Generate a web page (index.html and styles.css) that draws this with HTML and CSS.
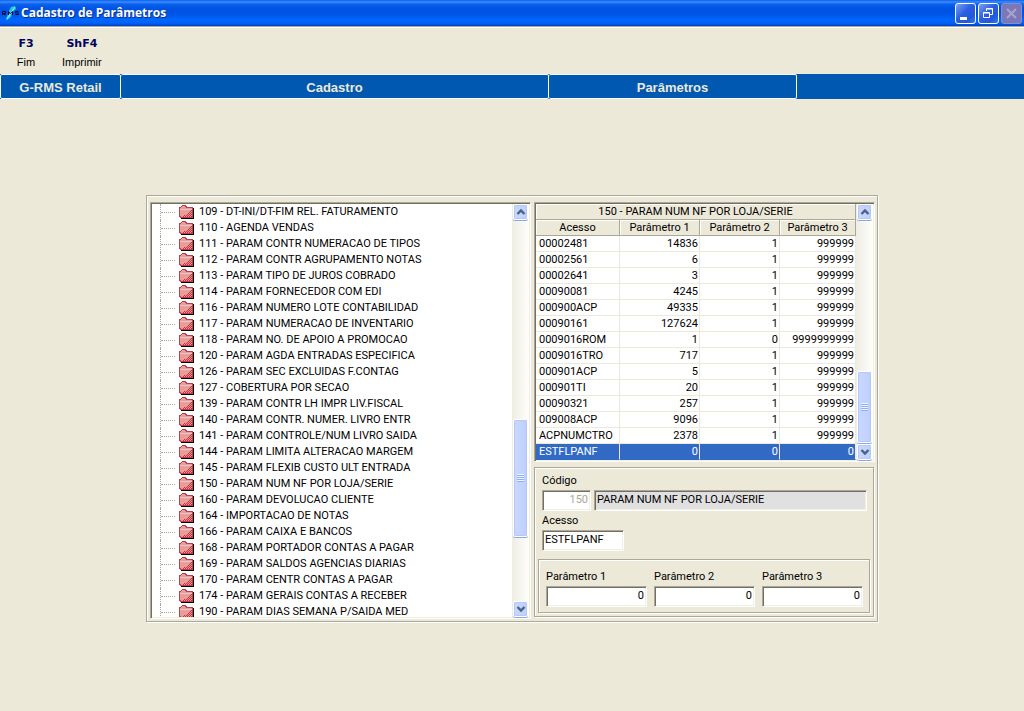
FILE: index.html
```html
<!DOCTYPE html>
<html lang="pt-BR">
<head>
<meta charset="utf-8">
<title>Cadastro de Parâmetros</title>
<link rel="stylesheet" href="styles.css">
</head>
<body>
<svg class="defs" aria-hidden="true">
  <defs>
    <symbol id="folder" viewBox="0 0 16 14">
      <g shape-rendering="crispEdges">
        <path d="M2 3h13v11H2z" fill="#000"/>
        <path d="M0 2h2V1h1V0h4v1h1v1h6v11H1v-1H0z" fill="#bc4046"/>
        <path d="M1 3h1V2h1V1h3v1h1v1h6v9H2v-1H1z" fill="#e89c9c"/>
        <path d="M1 4h12v1H1z" fill="#f4c4c4"/>
        <path d="M12 5h1v1h-1zM11 6h1v1h-1zM10 7h1v1h-1zM12 7h1v1h-1zM9 8h1v1H9zM11 8h1v1h-1zM8 9h1v1H8zM10 9h1v1h-1zM12 9h1v1h-1zM5 10h1v1H5zM7 10h1v1H7zM9 10h1v1H9zM11 10h1v1h-1zM4 11h1v1H4zM6 11h1v1H6zM8 11h1v1H8zM10 11h1v1h-1zM12 11h1v1h-1z" fill="#cc2c34"/>
      </g>
    </symbol>
    <symbol id="up" viewBox="0 0 10 8"><path d="M1.500 6 5 2.500 8.500 6" fill="none" stroke="#4d6185" stroke-width="2.400"/></symbol>
    <symbol id="down" viewBox="0 0 10 8"><path d="M1.500 2 5 5.500 8.500 2" fill="none" stroke="#4d6185" stroke-width="2.400"/></symbol>
  </defs>
</svg>

<header class="titlebar">
  <svg class="logo" viewBox="0 0 18 18" aria-hidden="true">
    <path d="M6 9 9 3l4-1 1 3-5 4z" fill="#20c8e0"/><path d="M4 15l2-5 4-1-1 4-4 3z" fill="#20c8e0"/><path d="M5 15 13 3" stroke="#8ff4ff"/>
    <path d="M.500 11V7.500h3v2h-3l3 1.500M6.500 11V7.500l2 2 2-2V11M16.500 7.500h-3v1.500h3v1.500h-3" fill="none" stroke="#001038"/>
  </svg>
  <h1 class="title">Cadastro de Parâmetros</h1>
  <div class="window-buttons">
    <button class="win" type="button" aria-label="Minimizar"><svg viewBox="0 0 19 19"><path d="M4 13h7v3H4z" fill="#fff"/></svg></button>
    <button class="win" type="button" aria-label="Restaurar"><svg viewBox="0 0 19 19" fill="none" stroke="#fff"><path d="M7.500 7V4.500h6v6H11M7 5h7M4.500 8.500h6v5h-6zM4 9h7"/></svg></button>
    <button class="win win-off" type="button" aria-label="Fechar" disabled><svg viewBox="0 0 19 19"><path d="m5 5 9 9M14 5l-9 9" stroke="#a9a4cc" stroke-width="2"/></svg></button>
  </div>
</header>

<div class="toolbar">
  <button class="tool" type="button"><b>F3</b><span>Fim</span></button>
  <button class="tool" type="button"><b>ShF4</b><span>Imprimir</span></button>
</div>

<nav class="path">
  <span class="crumb crumb-root">G-RMS Retail</span>
  <span class="crumb crumb-module">Cadastro</span>
  <span class="crumb crumb-page">Parâmetros</span>
</nav>

<main class="workspace">
  <div class="frame etched">
    <section class="tree sunken">
      <ul class="nodes">
        <li><svg><use href="#folder"/></svg>109 - DT-INI/DT-FIM REL. FATURAMENTO</li>
        <li><svg><use href="#folder"/></svg>110 - AGENDA VENDAS</li>
        <li><svg><use href="#folder"/></svg>111 - PARAM CONTR NUMERACAO DE TIPOS</li>
        <li><svg><use href="#folder"/></svg>112 - PARAM CONTR AGRUPAMENTO NOTAS</li>
        <li><svg><use href="#folder"/></svg>113 - PARAM TIPO DE JUROS COBRADO</li>
        <li><svg><use href="#folder"/></svg>114 - PARAM FORNECEDOR COM EDI</li>
        <li><svg><use href="#folder"/></svg>116 - PARAM NUMERO LOTE CONTABILIDAD</li>
        <li><svg><use href="#folder"/></svg>117 - PARAM NUMERACAO DE INVENTARIO</li>
        <li><svg><use href="#folder"/></svg>118 - PARAM NO. DE APOIO A PROMOCAO</li>
        <li><svg><use href="#folder"/></svg>120 - PARAM AGDA ENTRADAS ESPECIFICA</li>
        <li><svg><use href="#folder"/></svg>126 - PARAM SEC EXCLUIDAS F.CONTAG</li>
        <li><svg><use href="#folder"/></svg>127 - COBERTURA POR SECAO</li>
        <li><svg><use href="#folder"/></svg>139 - PARAM CONTR LH IMPR LIV.FISCAL</li>
        <li><svg><use href="#folder"/></svg>140 - PARAM CONTR. NUMER. LIVRO ENTR</li>
        <li><svg><use href="#folder"/></svg>141 - PARAM CONTROLE/NUM LIVRO SAIDA</li>
        <li><svg><use href="#folder"/></svg>144 - PARAM LIMITA ALTERACAO MARGEM</li>
        <li><svg><use href="#folder"/></svg>145 - PARAM FLEXIB CUSTO ULT ENTRADA</li>
        <li><svg><use href="#folder"/></svg>150 - PARAM NUM NF POR LOJA/SERIE</li>
        <li><svg><use href="#folder"/></svg>160 - PARAM DEVOLUCAO CLIENTE</li>
        <li><svg><use href="#folder"/></svg>164 - IMPORTACAO DE NOTAS</li>
        <li><svg><use href="#folder"/></svg>166 - PARAM CAIXA E BANCOS</li>
        <li><svg><use href="#folder"/></svg>168 - PARAM PORTADOR CONTAS A PAGAR</li>
        <li><svg><use href="#folder"/></svg>169 - PARAM SALDOS AGENCIAS DIARIAS</li>
        <li><svg><use href="#folder"/></svg>170 - PARAM CENTR CONTAS A PAGAR</li>
        <li><svg><use href="#folder"/></svg>174 - PARAM GERAIS CONTAS A RECEBER</li>
        <li><svg><use href="#folder"/></svg>190 - PARAM DIAS SEMANA P/SAIDA MED</li>
      </ul>
      <div class="scroll">
        <button class="arrow" type="button" aria-label="Rolar para cima"><svg><use href="#up"/></svg></button>
        <div class="track track-tree"><div class="thumb thumb-tree"><i class="grip"></i></div></div>
        <button class="arrow" type="button" aria-label="Rolar para baixo"><svg><use href="#down"/></svg></button>
      </div>
    </section>

    <div class="detail">
      <section class="list sunken">
        <table class="grid">
          <colgroup><col class="col-key"><col class="col-num"><col class="col-num"><col class="col-last"></colgroup>
          <thead>
            <tr><th colspan="4">150 - PARAM NUM NF POR LOJA/SERIE</th></tr>
            <tr><th>Acesso</th><th>Parâmetro 1</th><th>Parâmetro 2</th><th>Parâmetro 3</th></tr>
          </thead>
          <tbody>
            <tr><td>00002481</td><td>14836</td><td>1</td><td>999999</td></tr>
            <tr><td>00002561</td><td>6</td><td>1</td><td>999999</td></tr>
            <tr><td>00002641</td><td>3</td><td>1</td><td>999999</td></tr>
            <tr><td>00090081</td><td>4245</td><td>1</td><td>999999</td></tr>
            <tr><td>000900ACP</td><td>49335</td><td>1</td><td>999999</td></tr>
            <tr><td>00090161</td><td>127624</td><td>1</td><td>999999</td></tr>
            <tr><td>0009016ROM</td><td>1</td><td>0</td><td>9999999999</td></tr>
            <tr><td>0009016TRO</td><td>717</td><td>1</td><td>999999</td></tr>
            <tr><td>000901ACP</td><td>5</td><td>1</td><td>999999</td></tr>
            <tr><td>000901TI</td><td>20</td><td>1</td><td>999999</td></tr>
            <tr><td>00090321</td><td>257</td><td>1</td><td>999999</td></tr>
            <tr><td>009008ACP</td><td>9096</td><td>1</td><td>999999</td></tr>
            <tr><td>ACPNUMCTRO</td><td>2378</td><td>1</td><td>999999</td></tr>
            <tr class="selected"><td>ESTFLPANF</td><td>0</td><td>0</td><td>0</td></tr>
          </tbody>
        </table>
        <div class="scroll">
          <button class="arrow" type="button" aria-label="Rolar para cima"><svg><use href="#up"/></svg></button>
          <div class="track track-list"><div class="thumb thumb-list"><i class="grip"></i></div></div>
          <button class="arrow" type="button" aria-label="Rolar para baixo"><svg><use href="#down"/></svg></button>
        </div>
      </section>

      <form class="form etched">
        <label for="codigo">Código</label>
        <div class="code-row">
          <input class="field code num" id="codigo" value="150" disabled>
          <input class="field description" aria-label="Descrição" value="PARAM NUM NF POR LOJA/SERIE" readonly>
        </div>
        <label for="acesso">Acesso</label>
        <input class="field access" id="acesso" value="ESTFLPANF">
        <div class="params etched">
          <div class="param"><label for="p1">Parâmetro 1</label><input class="field num" id="p1" value="0"></div>
          <div class="param"><label for="p2">Parâmetro 2</label><input class="field num" id="p2" value="0"></div>
          <div class="param"><label for="p3">Parâmetro 3</label><input class="field num" id="p3" value="0"></div>
        </div>
      </form>
    </div>
  </div>
</main>
</body>
</html>
```
FILE: styles.css
```css
* { box-sizing: border-box; }
body {
  margin: 0;
  background: #ece9d8;
  color: #000;
  font: 11px/16px Roboto, "Liberation Sans", Arial, sans-serif;
}
button, input { font: inherit; color: inherit; border-radius: 0; }
button { border: 0; padding: 0; background: none; }
.defs { position: absolute; width: 0; height: 0; }

.titlebar {
  display: flex;
  align-items: center;
  height: 26px;
  padding: 0 2px;
  background: linear-gradient(#0a5ff0 0, #3a8cff 2px, #0b62ee 4px, #0054e3 8px, #0054e6 14px, #0066ff 20px, #0062f8 23px, #0042c4 26px);
}
.logo { width: 18px; height: 18px; margin-right: 1px; }
.title {
  flex: 1;
  margin: 0;
  color: #fff;
  font: bold 12px/26px "Open Sans", "Noto Sans", sans-serif;
  text-shadow: 1px 1px #0a2f8c;
}
.window-buttons { display: flex; gap: 2px; }
.win {
  width: 21px;
  height: 21px;
  border: 1px solid #fff;
  border-radius: 3px;
  background: linear-gradient(135deg, #7c9ff0, #2a5fe0 45%, #2458dc 75%, #3c78f4);
}
.win svg { display: block; width: 19px; height: 19px; }
.win-off { border-color: #8a8cd0; background: #7a78b8; }

.toolbar {
  display: flex;
  gap: 22px;
  height: 48px;
  padding: 9px 12px 0;
  border-top: 1px solid #aca899;
  box-shadow: inset 0 1px #fff;
}
.tool {
  display: grid;
  grid-template-rows: 18px 17px;
  min-width: 28px;
  align-content: start;
  justify-items: center;
}
.tool b { color: #000060; font: bold 11px/16px "DejaVu Sans", sans-serif; }
.tool span { font: 11px/16px "Liberation Sans", Arial, sans-serif; }

.path { display: flex; height: 25px; background: #0058b0; }
.crumb {
  border: 1px solid #fff;
  border-left-width: 0;
  border-radius: 2px;
  color: #ece9d8;
  font: bold 13px/25px "Liberation Sans", Arial, sans-serif;
  text-align: center;
}
.crumb-root { flex: 119; border-left-width: 1px; }
.crumb-module { flex: 427; }
.crumb-page { flex: 247; }
.path::after { content: ""; flex: 227; }

.workspace { display: flex; justify-content: center; padding: 96px 16px 16px; }
.etched {
  border: 1px solid #aca899;
  box-shadow: inset 1px 1px #fff, 1px 1px #fff;
}
.sunken, .field {
  border: 1px solid;
  border-color: #aca899 #fff #fff #aca899;
  box-shadow: inset 1px 1px #716f64, inset -1px -1px #f1efe2;
  background: #fff;
}
.sunken { display: flex; padding: 1px; }
.frame { display: flex; gap: 3px; flex: 0 1 732px; padding: 6px 2px 2px 3px; }

.tree { flex: 1; height: 417px; }
.nodes {
  flex: 1;
  margin: 0;
  padding: 0 0 0 8px;
  list-style: none;
  overflow: hidden;
}
.nodes li {
  display: flex;
  align-items: center;
  gap: 4px;
  height: 16px;
  border-left: 1px dotted #aca899;
  white-space: nowrap;
}
.nodes li::before { content: ""; width: 14px; border-top: 1px dotted #aca899; }
.nodes svg { width: 16px; height: 14px; }

.scroll {
  display: flex;
  flex-direction: column;
  width: 17px;
  background: linear-gradient(90deg, #eeede5, #fefefb);
}
.arrow, .thumb {
  border: 1px solid #fff;
  border-radius: 2px;
  background: linear-gradient(90deg, #cbd8fd, #bccffd);
  box-shadow: inset 0 0 0 1px #b5c8f7, 0 1px #8ca9e0;
}
.arrow { display: grid; place-items: center; height: 16px; margin: 0 1px; }
.arrow svg { width: 10px; height: 8px; }
.track { flex: 1; display: flex; flex-direction: column; padding: 0 1px; }
.track-tree::before { content: ""; flex: 200; }
.track-tree::after { content: ""; flex: 64; }
.thumb { display: grid; place-items: center; }
.thumb-tree { flex: 117; }
.track-list::before { content: ""; flex: 152; }
.track-list::after { content: ""; flex: 1; }
.thumb-list { flex: 71; }
.grip { width: 7px; height: 8px; background: repeating-linear-gradient(#eef4fe 0 1px, #8cb0f8 1px 2px); }

.detail { display: flex; flex-direction: column; gap: 5px; width: 341px; }
.list { height: 260px; }
.grid { flex: 1; table-layout: fixed; border-collapse: separate; border-spacing: 0; }
.col-key { width: 84px; }
.col-num { width: 80px; }
.col-last { width: 76px; }
.grid th, .grid td { height: 16px; padding: 1px 1px 0 3px; line-height: 14px; white-space: nowrap; }
.grid th {
  padding: 1px 0 0;
  background: #ece9d8;
  border: solid #aca899;
  border-width: 0 1px 1px 0;
  box-shadow: inset 1px 1px #fff;
  font-weight: normal;
}
.grid td { border: solid #ece9d8; border-width: 0 1px 1px 0; text-align: right; }
.grid td:first-child { text-align: left; }
.selected td { background: #316ac5; color: #fff; border-bottom-color: #316ac5; }

.form { display: flex; flex-direction: column; width: 340px; padding: 5px 3px 3px; }
.form > label, .code-row, .access { margin-left: 4px; }
.code-row { display: flex; gap: 3px; margin: 1px 3px 2px 4px; }
.field {
  width: 100%;
  min-width: 0;
  height: 21px;
  padding: 0 2px 2px;
}
.num { text-align: right; }
.code { width: 49px; color: #aca899; }
.description { flex: 1; background: #e0e0e0; }
.access { width: 82px; margin-top: 1px; }
.params { display: flex; gap: 7px; margin-top: 8px; padding: 9px 6px 5px 7px; }
.param { flex: 1; display: grid; gap: 1px; }
```
